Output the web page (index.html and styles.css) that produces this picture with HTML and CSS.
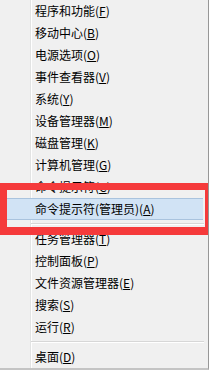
FILE: index.html
```html
<!DOCTYPE html>
<html lang="zh-CN">
<head>
    <meta charset="UTF-8">
    <meta name="viewport" content="width=device-width, initial-scale=1.0">
    <title>Win+X 菜单</title>
    <link rel="stylesheet" href="styles.css">
</head>
<body>
    <div class="menu">
        <ul class="items">
            <li class="item">程序和功能(<u>F</u>)</li>
            <li class="item">移动中心(<u>B</u>)</li>
            <li class="item">电源选项(<u>O</u>)</li>
            <li class="item">事件查看器(<u>V</u>)</li>
            <li class="item">系统(<u>Y</u>)</li>
            <li class="item">设备管理器(<u>M</u>)</li>
            <li class="item">磁盘管理(<u>K</u>)</li>
            <li class="item">计算机管理(<u>G</u>)</li>
            <li class="item">命令提示符(<u>C</u>)</li>
            <li class="item active">命令提示符(管理员)(<u>A</u>)</li>
            <li class="sep"></li>
            <li class="item">任务管理器(<u>T</u>)</li>
            <li class="item">控制面板(<u>P</u>)</li>
            <li class="item">文件资源管理器(<u>E</u>)</li>
            <li class="item">搜索(<u>S</u>)</li>
            <li class="item">运行(<u>R</u>)</li>
            <li class="sep"></li>
            <li class="item">桌面(<u>D</u>)</li>
        </ul>
        <div class="mark"></div>
    </div>
</body>
</html>
```

FILE: styles.css
```css
body {
    margin: 0;
    padding: 0;
    background-color: #f0f0f0;
    font-family: "Noto Sans CJK SC", "Microsoft YaHei", sans-serif;
    font-size: 12px;
    color: #000;
}
.menu {
    position: relative;
    width: 208px;
    height: 368px;
    border-right: 1px solid #979797;
    border-bottom: 2px solid #c4c4c4;
    background: linear-gradient(to right, transparent 30px, #e2e3e3 30px, #e2e3e3 31px, #fff 31px, #fff 32px, transparent 32px);
    overflow: hidden;
}
.items {
    list-style: none;
    margin: 0;
    padding: 0;
}
.item {
    height: 22px;
    line-height: 22px;
    padding-left: 35px;
    white-space: nowrap;
}
.item u {
    text-underline-offset: 1px;
}
.item.active {
    height: 20px;
    line-height: 20px;
    margin: 0 5px 0 3px;
    padding-left: 32px;
    background-color: #d1e3f5;
    border-top: 1px solid #a9c3de;
    border-bottom: 1px solid #a9c3de;
}
.sep {
    height: 8px;
    margin-left: 31px;
    margin-right: 4px;
    background: linear-gradient(to bottom, transparent 3px, #d7d7d7 3px, #d7d7d7 4px, #fff 4px, #fff 5px, transparent 5px);
}
.mark {
    position: absolute;
    left: 0;
    top: 183px;
    width: 198px;
    height: 37px;
    border: 7px solid #f53a3b;
    border-bottom-width: 8px;
}
```
